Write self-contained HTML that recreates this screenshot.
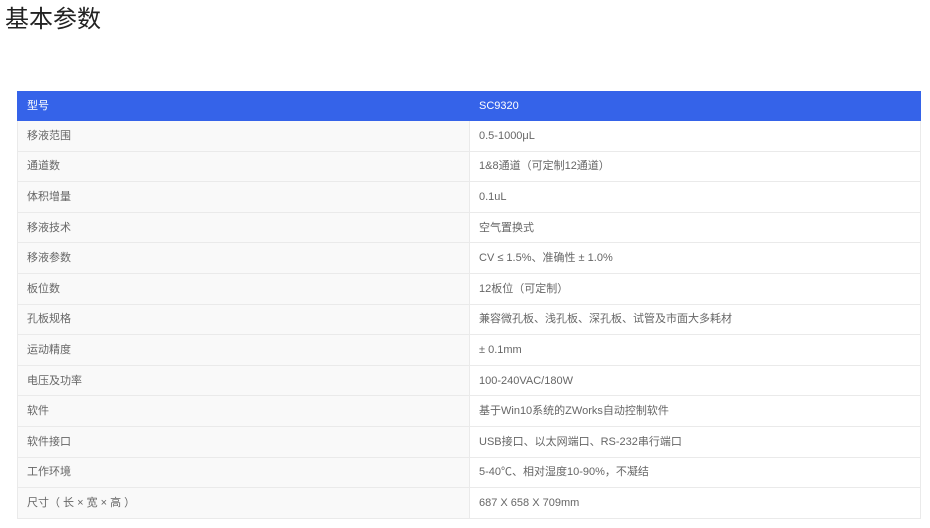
<!DOCTYPE html>
<html><head><meta charset="utf-8"><style>
body{margin:0;background:#fff;font-family:"Liberation Sans","Noto Sans CJK SC",sans-serif;width:930px;height:528px;overflow:hidden}
h1{position:absolute;left:5px;top:3px;margin:0;font-weight:normal;font-size:24px;color:#222;line-height:34px}
table{position:absolute;left:17px;top:91px;width:904px;border-collapse:collapse;font-size:11px;color:#666}
td{height:29.6px;padding:0 0 0 9px;border:1px solid #eaeaea;line-height:14px}
td:first-child{width:442px;background:#f9f9f9}
tr.h td{background:#3563e9;color:#fff;height:28px;border-color:#3563e9}
tr.h td:last-child{border-left:1px solid #8fa8f0}
</style></head><body>
<h1>基本参数</h1>
<table>
<tr class="h"><td>型号</td><td>SC9320</td></tr>
<tr><td>移液范围</td><td>0.5-1000μL</td></tr>
<tr><td>通道数</td><td>1&amp;8通道（可定制12通道）</td></tr>
<tr><td>体积增量</td><td>0.1uL</td></tr>
<tr><td>移液技术</td><td>空气置换式</td></tr>
<tr><td>移液参数</td><td>CV ≤ 1.5%、准确性 ± 1.0%</td></tr>
<tr><td>板位数</td><td>12板位（可定制）</td></tr>
<tr><td>孔板规格</td><td>兼容微孔板、浅孔板、深孔板、试管及市面大多耗材</td></tr>
<tr><td>运动精度</td><td>± 0.1mm</td></tr>
<tr><td>电压及功率</td><td>100-240VAC/180W</td></tr>
<tr><td>软件</td><td>基于Win10系统的ZWorks自动控制软件</td></tr>
<tr><td>软件接口</td><td>USB接口、以太网端口、RS-232串行端口</td></tr>
<tr><td>工作环境</td><td>5-40℃、相对湿度10-90%，不凝结</td></tr>
<tr><td>尺寸（ 长 × 宽 × 高 ）</td><td>687 X 658 X 709mm</td></tr>
</table>
</body></html>
